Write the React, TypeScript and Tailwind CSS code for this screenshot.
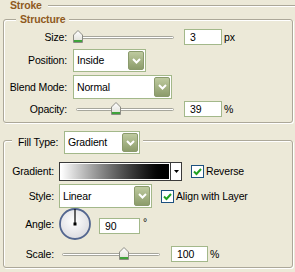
import React from "react";

function Chevron() {
  return (
    <svg width="9" height="6" viewBox="0 0 9 6">
      <path d="M1 1 L4.5 4.5 L8 1" fill="none" stroke="#fff" strokeWidth="2" />
    </svg>
  );
}

function Select({ value, className }: { value: string; className: string }) {
  return (
    <div className={`flex items-center bg-white border border-[#A3B88A] pl-[3px] pr-[1px] py-[1px] ${className}`}>
      <span className="flex-1 leading-none">{value}</span>
      <span className="flex h-full w-[16px] items-center justify-center rounded-[2px] border border-[#8A9A6C] bg-gradient-to-b from-[#BECA9F] to-[#8C9C6B]">
        <Chevron />
      </span>
    </div>
  );
}

function Input({ value, className }: { value: string; className: string }) {
  return (
    <div className={`flex h-[16px] items-center bg-white border border-[#A3B88A] pl-[5px] leading-none ${className}`}>
      {value}
    </div>
  );
}

function Thumb() {
  return (
    <svg width="10" height="13" viewBox="0 0 10 13">
      <defs>
        <linearGradient id="tg" x1="0" y1="0" x2="0" y2="1">
          <stop offset="0" stopColor="#ffffff" />
          <stop offset="1" stopColor="#DEDED6" />
        </linearGradient>
      </defs>
      <path d="M0.5 5 L5 0.5 L9.5 5 L9.5 12.5 L0.5 12.5 Z" fill="url(#tg)" stroke="#8C8C84" />
      <rect x="1" y="10" width="8" height="2" fill="#3FA33A" />
    </svg>
  );
}

function Slider({ thumb, className }: { thumb: string; className: string }) {
  return (
    <div className={`relative flex h-[16px] items-center ${className}`}>
      <div className="mx-[3px] h-[3px] flex-1 rounded-full border border-[#A6A69C] bg-white" />
      <div className={`absolute top-[1px] ${thumb}`}>
        <Thumb />
      </div>
    </div>
  );
}

function Check({ label, className }: { label: string; className: string }) {
  return (
    <div className={`flex items-center ${className}`}>
      <span className="flex h-[13px] w-[13px] items-center justify-center border border-[#1C5180] bg-white">
        <svg width="9" height="9" viewBox="0 0 9 9">
          <path d="M1 4.5 L3.5 7 L8 2" fill="none" stroke="#21A121" strokeWidth="2" />
        </svg>
      </span>
      <span className="ml-[2px] leading-none">{label}</span>
    </div>
  );
}

function Label({ text, w }: { text: string; w: string }) {
  return <span className={`${w} shrink-0 text-right leading-none`}>{text}</span>;
}

export default function App() {
  return (
    <div className="h-[272px] w-[295px] overflow-hidden bg-[#ECE9D8] font-['Liberation_Sans',Arial,sans-serif] text-[10.5px] tracking-[-0.15px] text-black">
      <div className="flex h-[11px] items-center">
        <span className="ml-[10px] text-[10.5px] font-bold leading-none text-[#8F5A1E]">Stroke</span>
        <div className="ml-[6px] h-px flex-1 bg-[#ACA899] shadow-[0_1px_0_#fff]" />
      </div>

      {/* Structure */}
      <div className="relative ml-[3px] mt-[8px] h-[104px] w-[290px] rounded-[3px] border border-[#ACA899] shadow-[inset_1px_1px_0_#fff,1px_1px_0_#fff]">
        <span className="absolute left-[12px] top-[-7px] bg-[#ECE9D8] px-[4px] text-[10.5px] font-bold leading-[12px] text-[#8F5A1E]">
          Structure
        </span>
        <div className="flex flex-col pt-[9px]">
          <div className="flex h-[16px] items-center">
            <Label text="Size:" w="w-[63px]" />
            <Slider className="ml-[6px] w-[104px]" thumb="left-0" />
            <Input value="3" className="ml-[7px] w-[38px]" />
            <span className="ml-[2px] leading-none">px</span>
          </div>
          <div className="mt-[4px] flex h-[23px] items-center">
            <Label text="Position:" w="w-[63px]" />
            <Select value="Inside" className="ml-[6px] h-[23px] w-[73px]" />
          </div>
          <div className="mt-[3px] flex h-[24px] items-center">
            <Label text="Blend Mode:" w="w-[63px]" />
            <Select value="Normal" className="ml-[6px] h-[24px] w-[99px]" />
          </div>
          <div className="mt-[2px] flex h-[16px] items-center">
            <Label text="Opacity:" w="w-[63px]" />
            <Slider className="ml-[6px] w-[104px]" thumb="left-[38px]" />
            <Input value="39" className="ml-[7px] w-[38px]" />
            <span className="ml-[2px] leading-none">%</span>
          </div>
        </div>
      </div>

      {/* Fill */}
      <div className="relative ml-[3px] mt-[17px] h-[128px] w-[290px] rounded-[3px] border border-[#ACA899] shadow-[inset_1px_1px_0_#fff,1px_1px_0_#fff]">
        <div className="absolute left-[8px] top-[-10px] flex items-center bg-[#ECE9D8] pl-[6px] pr-[3px]">
          <span className="w-[41px] leading-none">Fill Type:</span>
          <Select value="Gradient" className="ml-[5px] h-[23px] w-[76px]" />
        </div>
        <div className="flex flex-col pt-[21px]">
          <div className="flex h-[19px] items-center">
            <Label text="Gradient:" w="w-[50px]" />
            <div className="ml-[5px] flex h-[19px] w-[123px] border border-[#3A3A3A]">
              <div className="flex-1 border border-white bg-gradient-to-r from-white to-black" />
              <div className="flex w-[11px] items-center justify-center border-l border-[#3A3A3A] bg-white">
                <svg width="5" height="3" viewBox="0 0 5 3">
                  <path d="M0 0 L5 0 L2.5 3 Z" fill="#000" />
                </svg>
              </div>
            </div>
            <Check label="Reverse" className="ml-[9px]" />
          </div>
          <div className="mt-[3px] flex h-[24px] items-center">
            <Label text="Style:" w="w-[50px]" />
            <Select value="Linear" className="ml-[5px] h-[24px] w-[93px]" />
            <Check label="Align with Layer" className="ml-[9px]" />
          </div>
          <div className="flex h-[32px] items-center">
            <Label text="Angle:" w="w-[50px]" />
            <svg className="ml-[5px]" width="32" height="32" viewBox="0 0 32 32">
              <defs>
                <radialGradient id="ag" cx="0.45" cy="0.4" r="0.6">
                  <stop offset="0" stopColor="#ffffff" />
                  <stop offset="1" stopColor="#DCDCE0" />
                </radialGradient>
              </defs>
              <circle cx="16" cy="16" r="15" fill="url(#ag)" stroke="#53668F" strokeWidth="1.8" />
              <line x1="16" y1="16" x2="16" y2="1" stroke="#000" strokeWidth="1.2" />
              <rect x="14.5" y="14.5" width="3" height="3" fill="#000" />
            </svg>
            <Input value="90" className="ml-[8px] mt-[10px] w-[41px] self-start" />
            <span className="ml-[3px] mt-[9px] self-start leading-none">°</span>
          </div>
          <div className="mt-[6px] flex h-[16px] items-center">
            <Label text="Scale:" w="w-[50px]" />
            <Slider className="ml-[5px] w-[104px]" thumb="left-[60px]" />
            <Input value="100" className="ml-[8px] w-[37px]" />
            <span className="ml-[2px] leading-none">%</span>
          </div>
        </div>
      </div>
    </div>
  );
}
